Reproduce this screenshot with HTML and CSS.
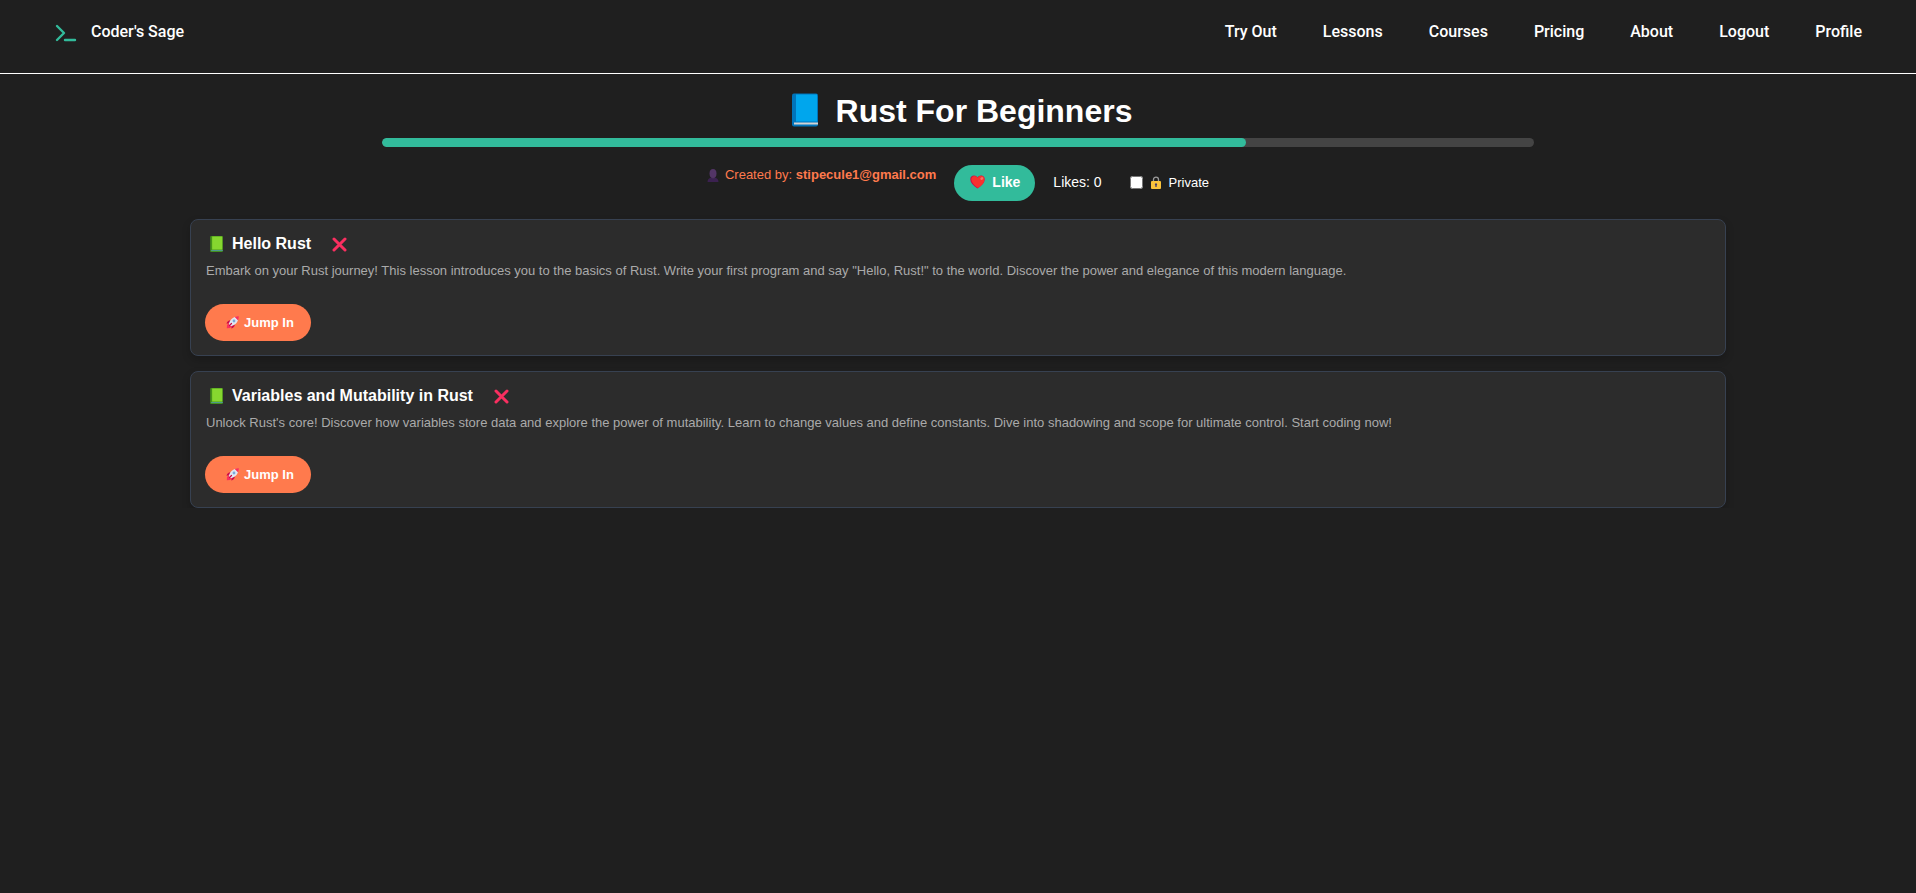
FILE: index.html
```html
<!DOCTYPE html>
<html lang="en">
<head>
    <meta charset="UTF-8">
    <meta name="viewport" content="width=device-width, initial-scale=1.0">
    <title>Coder's Sage</title>
    <link rel="stylesheet" href="styles.css">
</head>
<body>
<svg class="symbols" aria-hidden="true">
    <symbol id="book" viewBox="0 0 26 33">
        <rect class="book-spine" x="0" y="0" width="26" height="33" rx="2"/>
        <rect class="book-cover" x="4" y="1" width="21" height="27"/>
        <rect class="book-pages" x="2" y="29" width="24" height="2"/>
    </symbol>
    <symbol id="cross" viewBox="0 0 15 15">
        <path d="M2 2L13 13M13 2L2 13" fill="none" stroke="#f92f60" stroke-width="3" stroke-linecap="round"/>
    </symbol>
    <symbol id="rocket" viewBox="0 0 13 13">
        <path d="M4.500 4.200C2.500 4.200 1 5.500 0.500 7.800L3.500 7.200zM8.800 8.500C8.800 10.500 7.500 12 5.200 12.500L5.800 9.500z" fill="#ca0b4a"/>
        <path d="M2.500 7.500L5.500 10.500L4 12L0.800 12.300L1 9z" fill="#f92f60"/>
        <path d="M3 8.500C3 5.500 5.500 2 9 1L12 4C11 7.500 7.500 10 4.500 10z" fill="#e1e6f2"/>
        <path d="M8.800 1C10.300 0.400 11.800 0.200 12.800 0.200C12.800 1.200 12.600 2.700 12 4.200z" fill="#f92f60"/>
        <circle cx="8" cy="5" r="1.400" fill="#7aa9d8"/>
        <path d="M3.500 9.500L5.500 7.500" stroke="#ca0b4a" stroke-width="1.200" stroke-linecap="round"/>
    </symbol>
</svg>

<header class="navbar">
    <a class="brand" href="#">
        <svg class="brand-icon" viewBox="0 0 22 20" aria-hidden="true">
            <path d="M2 4L9 11L2 18M10 18H20" fill="none" stroke="#32bb9b" stroke-width="2.400" stroke-linecap="round" stroke-linejoin="round"/>
        </svg>
        <span>Coder's Sage</span>
    </a>
    <nav class="nav-links">
        <a href="#">Try Out</a>
        <a href="#">Lessons</a>
        <a href="#">Courses</a>
        <a href="#">Pricing</a>
        <a href="#">About</a>
        <a href="#">Logout</a>
        <a href="#">Profile</a>
    </nav>
</header>

<main class="container">
    <h1 class="course-title">
        <svg class="book book-blue" aria-hidden="true"><use href="#book"/></svg>
        <span>Rust For Beginners</span>
    </h1>
    <div class="progress">
        <div class="progress-bar" style="width: 75%"></div>
    </div>

    <div class="course-info">
        <p class="author">
            <svg class="author-icon" viewBox="0 0 12 13" aria-hidden="true">
                <path d="M0.500 13C0.500 10 2.500 9 4.500 8.500H7.500C9.500 9 11.500 10 11.500 13z" fill="#3b2150"/>
                <path d="M4.500 7H7.500V9L6 10.500L4.500 9z" fill="#402a52"/>
                <ellipse cx="6" cy="4.500" rx="3.500" ry="4.500" fill="#533566"/>
            </svg>
            <span>Created by: <strong>stipecule1@gmail.com</strong></span>
        </p>
        <button class="like-button" type="button">
            <svg class="heart-icon" viewBox="0 0 15 14" aria-hidden="true">
                <path d="M7.500 13.500C3 10.500 0.300 7.500 0.300 4.200C0.300 1.800 2 0.500 4 0.500C5.600 0.500 6.800 1.300 7.500 2.500C8.200 1.300 9.400 0.500 11 0.500C13 0.500 14.700 1.800 14.700 4.200C14.700 7.500 12 10.500 7.500 13.500z" fill="#ca0b4a"/>
                <path d="M8 13.100C4 10.300 1.300 7.500 1.300 4.300C1.300 2.300 2.700 1 4.500 1C6 1 7 1.800 7.800 3C8.400 1.700 9.600 0.800 11.200 0.800C13 0.800 14.500 2 14.500 4.200C14.500 7.500 12 10.300 8 13.100z" fill="#f8312f"/>
                <ellipse cx="11.800" cy="3.500" rx="1.600" ry="1.200" transform="rotate(-40 11.800 3.500)" fill="#f37366"/>
            </svg>
            <span>Like</span>
        </button>
        <span class="likes">Likes: 0</span>
        <label class="private">
            <input type="checkbox" name="private">
            <svg class="lock-icon" viewBox="0 0 10 13" aria-hidden="true">
                <path d="M2.500 6V3.500C2.500 0.300 7.500 0.300 7.500 3.500V6" fill="none" stroke="#9b9b9b" stroke-width="1.300"/>
                <rect x="0" y="5" width="10" height="8" rx="1" fill="#f9c23c"/>
                <path d="M5 7.300A1.200 1.200 0 0 1 5.600 9.500V11H4.400V9.500A1.200 1.200 0 0 1 5 7.300z" fill="#433b6b"/>
            </svg>
            <span>Private</span>
        </label>
    </div>

    <section class="lessons">
        <article class="lesson">
            <h2 class="lesson-title">
                <svg class="book book-green" aria-hidden="true"><use href="#book"/></svg>
                <span>Hello Rust</span>
                <button class="delete-button" type="button" aria-label="Delete">
                    <svg class="cross-icon" aria-hidden="true"><use href="#cross"/></svg>
                </button>
            </h2>
            <p class="lesson-text">Embark on your Rust journey! This lesson introduces you to the basics of Rust. Write your first program and say "Hello, Rust!" to the world. Discover the power and elegance of this modern language.</p>
            <button class="jump-button" type="button">
                <svg class="rocket-icon" aria-hidden="true"><use href="#rocket"/></svg>
                <span>Jump In</span>
            </button>
        </article>
        <article class="lesson">
            <h2 class="lesson-title">
                <svg class="book book-green" aria-hidden="true"><use href="#book"/></svg>
                <span>Variables and Mutability in Rust</span>
                <button class="delete-button" type="button" aria-label="Delete">
                    <svg class="cross-icon" aria-hidden="true"><use href="#cross"/></svg>
                </button>
            </h2>
            <p class="lesson-text">Unlock Rust's core! Discover how variables store data and explore the power of mutability. Learn to change values and define constants. Dive into shadowing and scope for ultimate control. Start coding now!</p>
            <button class="jump-button" type="button">
                <svg class="rocket-icon" aria-hidden="true"><use href="#rocket"/></svg>
                <span>Jump In</span>
            </button>
        </article>
    </section>
</main>
</body>
</html>
```
FILE: styles.css
```css
* {
    box-sizing: border-box;
}
body {
    margin: 0;
    background-color: #1f1f1f;
    color: #fff;
    font-family: "Liberation Sans", Arial, sans-serif;
    font-size: 13px;
}
h1, h2, p {
    margin: 0;
}
button {
    border: none;
    color: #fff;
    font-family: inherit;
    font-weight: bold;
    cursor: pointer;
}
svg {
    flex-shrink: 0;
}
.symbols {
    display: none;
}

/* Navbar */
.navbar {
    display: flex;
    justify-content: space-between;
    padding: 20px 54px 29px 55px;
    border-bottom: 1px solid #fff;
    font-family: Roboto, sans-serif;
    font-size: 16px;
    font-weight: 500;
    line-height: 24px;
}
.navbar a {
    color: #fff;
    text-decoration: none;
}
.brand {
    display: flex;
    align-items: center;
    gap: 14px;
}
.brand-icon {
    width: 22px;
    height: 20px;
}
.nav-links {
    display: flex;
    gap: 46px;
}

/* Course */
.container {
    max-width: 1536px;
    margin: 0 auto;
    padding-top: 18px;
}
.course-title {
    display: flex;
    justify-content: center;
    align-items: flex-start;
    gap: 18px;
    padding-left: 8px;
    font-size: 32px;
    line-height: 38px;
}
.book-blue {
    --spine: #0074ba;
    --cover: #00a6ed;
    --pages: #d3d3d3;
    width: 26px;
    height: 36px;
}
.book-green {
    --spine: #44911b;
    --cover: #86d72f;
    --pages: #4f9a94;
    width: 13px;
    height: 16px;
}
.book-spine {
    fill: var(--spine);
}
.book-cover {
    fill: var(--cover);
}
.book-pages {
    fill: var(--pages);
}
.progress {
    width: 75%;
    height: 9px;
    margin: 8px auto 0;
    border-radius: 5px;
    background-color: #444;
    overflow: hidden;
}
.progress-bar {
    height: 100%;
    border-radius: 5px;
    background-color: #32bb9b;
}
.course-info {
    display: flex;
    justify-content: center;
    align-items: center;
    gap: 18px;
    margin-top: 18px;
}
.author {
    display: flex;
    align-items: center;
    align-self: flex-start;
    gap: 6px;
    color: #ff7a4d;
    line-height: 20px;
}
.author-icon {
    width: 12px;
    height: 13px;
}
.like-button {
    display: flex;
    align-items: center;
    gap: 7px;
    height: 36px;
    padding: 0 15px 2px 16px;
    border-radius: 18px;
    background-color: #32bb9b;
    font-size: 14px;
}
.heart-icon {
    width: 15px;
    height: 14px;
}
.likes {
    padding-bottom: 2px;
    font-size: 14px;
}
.private {
    display: flex;
    align-items: center;
    gap: 8px;
    margin-left: 10px;
    padding-bottom: 2px;
}
.private input {
    width: 13px;
    height: 13px;
    margin: 0;
}
.lock-icon {
    width: 10px;
    height: 13px;
}

/* Lessons */
.lessons {
    display: grid;
    gap: 15px;
    margin-top: 18px;
}
.lesson {
    padding: 14px;
    border: 1px solid #374151;
    border-radius: 8px;
    background-color: #2c2c2c;
    box-shadow: 0 4px 8px rgba(0, 0, 0, 0.2);
}
.lesson-title {
    display: flex;
    align-items: center;
    gap: 9px;
    padding-left: 5px;
    font-size: 16px;
    line-height: 20px;
}
.delete-button {
    display: flex;
    margin-left: 12px;
    padding: 0;
    background: none;
}
.cross-icon {
    width: 15px;
    height: 15px;
}
.lesson-text {
    margin: 7px 1px 23px;
    color: #aaa;
    line-height: 20px;
}
.jump-button {
    display: flex;
    align-items: center;
    gap: 5px;
    height: 37px;
    padding: 0 17px 1px 21px;
    border-radius: 19px;
    background-color: #ff7a4d;
    font-size: 13px;
}
.rocket-icon {
    width: 13px;
    height: 13px;
}
```
